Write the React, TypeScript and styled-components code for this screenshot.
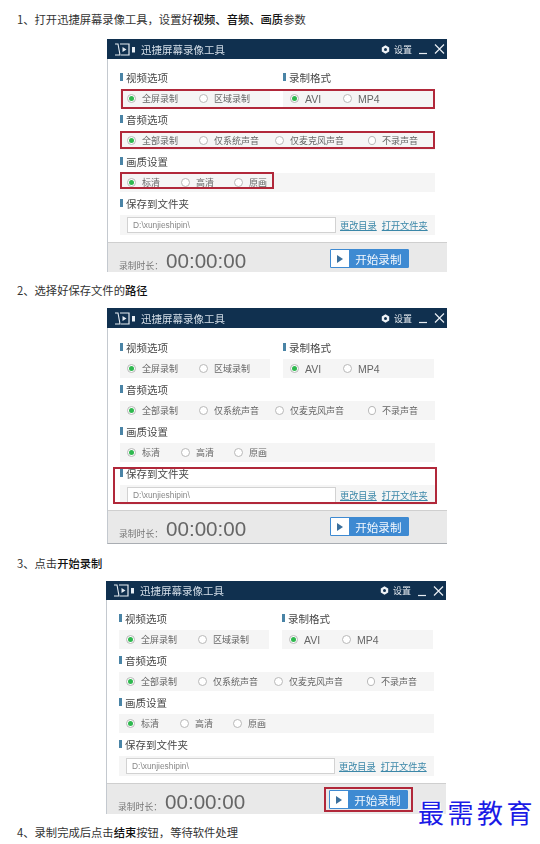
import React from "react";
import styled, { createGlobalStyle } from "styled-components";

const GlobalStyle = createGlobalStyle`
  html, body {
    margin: 0;
    padding: 0;
    background: #fff;
  }
`;

const cjk = `"Noto Sans CJK SC", "Liberation Sans", sans-serif`;

const Page = styled.main`
  position: relative;
  width: 540px;
  height: 844px;
  padding-top: 10px;
  box-sizing: border-box;
  overflow: hidden;
  font-family: ${cjk};
`;

const StepText = styled.p`
  margin: 0 0 0 17px;
  height: 18px;
  line-height: 18px;
  font-size: 11.3px;
  color: #333;
  white-space: nowrap;
`;

const Strong = styled.b`
  color: #111;
  font-weight: 500;
`;

const Win = styled.section<{ $left: number; $height: number; $above: number; $below: number; $closed?: boolean }>`
  position: relative;
  display: flex;
  flex-direction: column;
  box-sizing: border-box;
  margin: ${(p) => p.$above}px 0 ${(p) => p.$below}px ${(p) => p.$left}px;
  width: 340px;
  height: ${(p) => p.$height}px;
  border-left: 1px solid #c4c9cf;
  border-bottom: ${(p) => (p.$closed ? "1px solid #a9adb2" : "none")};
  background: #fff;
  filter: blur(0.4px);
`;

const TitleBar = styled.header<{ $height: number }>`
  display: flex;
  align-items: center;
  flex: none;
  height: ${(p) => p.$height}px;
  margin-left: -1px;
  padding: 0 2px 0 7px;
  background: #10304f;
  color: #dfe6ee;
`;

const AppTitle = styled.span`
  margin-left: 5px;
  font-size: 10.5px;
  color: #d5dfe9;
`;

const TitleActions = styled.div`
  display: flex;
  align-items: center;
  margin-left: auto;
`;

const SettingLabel = styled.span`
  margin-left: 4px;
  font-size: 9px;
  color: #e4e9ef;
`;

const Content = styled.div<{ $top: number }>`
  flex: 1;
  padding: ${(p) => p.$top}px 12px 0 12px;
`;

const Section = styled.div`
  margin-bottom: 4px;
`;

const Heading = styled.h3`
  display: flex;
  align-items: center;
  gap: 3px;
  margin: 0 0 5px 0;
  height: 14px;
  font-size: 10.5px;
  font-weight: 400;
  color: #484848;

  &::before {
    content: "";
    width: 3px;
    height: 8px;
    background: #4a84a6;
  }
`;

const Columns = styled.div`
  display: grid;
  grid-template-columns: 150px 151px;
  gap: 13px;
`;

const OptionRow = styled.div`
  display: flex;
  align-items: center;
  height: 19px;
  padding-left: 7px;
  background: #f5f5f5;
`;

const Option = styled.label<{ $width: number; $latin?: boolean }>`
  display: flex;
  align-items: center;
  gap: 6px;
  width: ${(p) => p.$width}px;
  font-family: ${(p) => (p.$latin ? `"Liberation Sans", sans-serif` : "inherit")};
  font-size: ${(p) => (p.$latin ? "10.5px" : "9px")};
  color: #666;
  white-space: nowrap;
`;

const RadioDot = styled.span<{ $on?: boolean }>`
  display: flex;
  align-items: center;
  justify-content: center;
  box-sizing: border-box;
  width: 9px;
  height: 9px;
  border: 1px solid #b8b8b8;
  border-radius: 50%;
  background: #fff;

  &::after {
    content: "";
    display: ${(p) => (p.$on ? "block" : "none")};
    width: 5px;
    height: 5px;
    border-radius: 50%;
    background: #2fb84f;
  }
`;

const PathRow = styled(OptionRow)`
  height: 20px;
  gap: 4px;
`;

const PathInput = styled.div`
  box-sizing: border-box;
  width: 209px;
  height: 16px;
  padding-left: 5px;
  line-height: 14px;
  border: 1px solid #d2d2d2;
  background: #fff;
  font-family: "Liberation Sans", sans-serif;
  font-size: 8.4px;
  color: #888;
`;

const FolderLink = styled.a`
  margin-right: 1px;
  font-size: 9.2px;
  color: #3b87a8;
  text-decoration: underline;
  white-space: nowrap;
`;

const Footer = styled.footer<{ $height: number }>`
  display: flex;
  align-items: flex-start;
  flex: none;
  box-sizing: border-box;
  height: ${(p) => p.$height}px;
  padding: 6px 0 0 11px;
  border-top: 1px solid #cfcfcf;
  background: #e9e9e9;
`;

const TimerLabel = styled.span`
  margin-top: 10px;
  width: 47px;
  font-size: 8.8px;
  color: #777;
  white-space: nowrap;
`;

const Timer = styled.span`
  margin-top: 1px;
  font-family: "Liberation Sans", sans-serif;
  font-size: 20.6px;
  line-height: 22px;
  color: #666;
`;

const StartButton = styled.button`
  display: flex;
  align-items: center;
  box-sizing: border-box;
  margin-left: 84px;
  padding: 0;
  width: 79px;
  height: 19px;
  border: 1px solid #3e8ad2;
  border-radius: 1px;
  background: #3e8ad2;
  font-family: ${cjk};
  font-size: 11.6px;
  color: #f4f8fd;
`;

const PlayBox = styled.span`
  display: flex;
  align-items: center;
  justify-content: center;
  flex: none;
  margin-right: 6px;
  width: 18px;
  height: 100%;
  background: #fff;

  &::after {
    content: "";
    border-left: 6px solid #3a6f9c;
    border-top: 4px solid transparent;
    border-bottom: 4px solid transparent;
  }
`;

const Highlight = styled.div<{ $x: number; $y: number; $w: number; $h: number }>`
  position: absolute;
  left: ${(p) => p.$x}px;
  top: ${(p) => p.$y}px;
  box-sizing: border-box;
  width: ${(p) => p.$w}px;
  height: ${(p) => p.$h}px;
  border: 2px solid #b1283a;
`;

const Watermark = styled.div`
  position: absolute;
  left: 418px;
  top: 794px;
  font-size: 26px;
  line-height: 36px;
  letter-spacing: 3.5px;
  color: #1a1ae6;
  white-space: nowrap;
  text-shadow: 0 0 1px #fff, 1px 1px 0 #fff, -1px -1px 0 #fff;
`;

const Logo = () => (
  <svg width="22" height="13" viewBox="0 0 22 13" fill="none" stroke="#e6edf4">
    <path d="M1 1h3l2 11H1" strokeWidth="1.1" />
    <path d="M6 1h9v11H7" strokeWidth="1.2" />
    <path d="M8.5 4l4 2.5-4 2.5z" fill="#e6edf4" stroke="none" />
    <rect x="18" y="4" width="3" height="5.5" fill="#e6edf4" stroke="none" />
  </svg>
);

const Gear = () => (
  <svg width="9" height="9" viewBox="0 0 9 9">
    <path d="M4.5.3l3.7 2.1v4.2L4.5 8.700.8 6.600V2.400z" fill="#eef2f6" />
    <circle cx="4.500" cy="4.500" r="1.500" fill="#10304f" />
  </svg>
);

const WindowControls = () => (
  <svg width="33" height="12" viewBox="0 0 33 12" fill="none" stroke="#e8edf3" strokeWidth="1.2">
    <path d="M7 10.500h8" />
    <path d="M23 1.500l9 9M32 1.500l-9 9" />
  </svg>
);

type Choice = { label: string; width: number; on?: boolean; latin?: boolean };

const OptionGroup = ({ items }: { items: Choice[] }) => (
  <OptionRow>
    {items.map((item) => (
      <Option key={item.label} $width={item.width} $latin={item.latin}>
        <RadioDot $on={item.on} />
        {item.label}
      </Option>
    ))}
  </OptionRow>
);

interface WindowProps {
  left: number;
  height: number;
  above: number;
  below: number;
  titleHeight: number;
  top: number;
  footerHeight: number;
  closed?: boolean;
  boxes: { x: number; y: number; w: number; h: number }[];
}

const RecorderWindow = ({ left, height, above, below, titleHeight, top, footerHeight, closed, boxes }: WindowProps) => (
  <Win $left={left} $height={height} $above={above} $below={below} $closed={closed}>
    <TitleBar $height={titleHeight}>
      <Logo />
      <AppTitle>迅捷屏幕录像工具</AppTitle>
      <TitleActions>
        <Gear />
        <SettingLabel>设置</SettingLabel>
        <WindowControls />
      </TitleActions>
    </TitleBar>
    <Content $top={top}>
      <Columns>
        <Section>
          <Heading>视频选项</Heading>
          <OptionGroup
            items={[
              { label: "全屏录制", width: 72, on: true },
              { label: "区域录制", width: 60 },
            ]}
          />
        </Section>
        <Section>
          <Heading>录制格式</Heading>
          <OptionGroup
            items={[
              { label: "AVI", width: 53, on: true, latin: true },
              { label: "MP4", width: 50, latin: true },
            ]}
          />
        </Section>
      </Columns>
      <Section>
        <Heading>音频选项</Heading>
        <OptionGroup
          items={[
            { label: "全部录制", width: 72, on: true },
            { label: "仅系统声音", width: 76 },
            { label: "仅麦克风声音", width: 93 },
            { label: "不录声音", width: 50 },
          ]}
        />
      </Section>
      <Section>
        <Heading>画质设置</Heading>
        <OptionGroup
          items={[
            { label: "标清", width: 54, on: true },
            { label: "高清", width: 53 },
            { label: "原画", width: 40 },
          ]}
        />
      </Section>
      <Section>
        <Heading>保存到文件夹</Heading>
        <PathRow>
          <PathInput>D:\xunjieshipin\</PathInput>
          <FolderLink>更改目录</FolderLink>
          <FolderLink>打开文件夹</FolderLink>
        </PathRow>
      </Section>
    </Content>
    <Footer $height={footerHeight}>
      <TimerLabel>录制时长：</TimerLabel>
      <Timer>00:00:00</Timer>
      <StartButton>
        <PlayBox />
        开始录制
      </StartButton>
    </Footer>
    {boxes.map((b) => (
      <Highlight key={`${b.x}-${b.y}`} $x={b.x} $y={b.y} $w={b.w} $h={b.h} />
    ))}
  </Win>
);

export default function App() {
  return (
    <Page>
      <GlobalStyle />
      <StepText>
        1、打开迅捷屏幕录像工具，设置好<Strong>视频、音频、画质</Strong>参数
      </StepText>
      <RecorderWindow
        left={107}
        height={233}
        above={11}
        below={9}
        titleHeight={20}
        top={11}
        footerHeight={30}
        boxes={[
          { x: 13, y: 50, w: 314, h: 20 },
          { x: 12, y: 92, w: 315, h: 18 },
          { x: 12, y: 133, w: 154, h: 17 },
        ]}
      />
      <StepText>
        2、选择好保存文件的<Strong>路径</Strong>
      </StepText>
      <RecorderWindow
        left={107}
        height={236}
        above={9}
        below={10}
        titleHeight={20}
        top={12}
        footerHeight={33}
        closed
        boxes={[{ x: 5, y: 159, w: 324, h: 37 }]}
      />
      <StepText>
        3、点击<Strong>开始录制</Strong>
      </StepText>
      <RecorderWindow
        left={106}
        height={233}
        above={9}
        below={9}
        titleHeight={19}
        top={11}
        footerHeight={31}
        boxes={[{ x: 217, y: 206, w: 89, h: 25 }]}
      />
      <StepText>
        4、录制完成后点击<Strong>结束</Strong>按钮，等待软件处理
      </StepText>
      <Watermark>最需教育</Watermark>
    </Page>
  );
}
